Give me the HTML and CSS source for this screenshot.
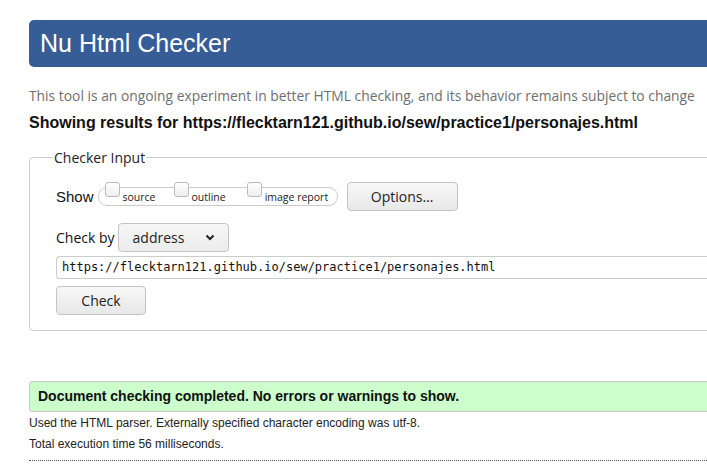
FILE: index.html
```html
<!DOCTYPE html>
<html lang="en">
<head>
<meta charset="utf-8">
<title>Nu Html Checker</title>
<link rel="stylesheet" href="styles.css">
</head>
<body>
<div class="page">
  <h1 class="banner">Nu Html Checker</h1>
  <p class="tagline">This tool is an ongoing experiment in better HTML checking, and its behavior remains subject to change</p>
  <p class="showing">Showing results for https://flecktarn121.github.io/sew/practice1/personajes.html</p>
  <fieldset class="input-box">
    <legend class="legend">Checker Input</legend>
    <div class="row show-row">
      <span class="show-label">Show</span>
      <span class="cb-group">
        <label class="cb"><span class="box"></span>source</label>
        <label class="cb"><span class="box"></span>outline</label>
        <label class="cb"><span class="box"></span>image report</label>
      </span>
      <span class="btn options">Options…</span>
    </div>
    <div class="row checkby-row">
      <span class="checkby-label">Check by</span>
      <span class="select">address<svg class="chev" width="10" height="7" viewBox="0 0 10 7"><path d="M1.5 1.5 L5 5 L8.5 1.5" fill="none" stroke="#222" stroke-width="2"/></svg></span>
    </div>
    <div class="url">https://flecktarn121.github.io/sew/practice1/personajes.html</div>
    <span class="btn check">Check</span>
  </fieldset>
  <div class="success">Document checking completed. No errors or warnings to show.</div>
  <p class="details first">Used the HTML parser. Externally specified character encoding was utf-8.</p>
  <p class="details">Total execution time 56 milliseconds.</p>
  <hr class="dotted">
</div>
</body>
</html>
```
FILE: styles.css
```css
html, body {
  margin: 0;
  padding: 0;
  overflow: hidden;
  background: #fff;
}
.page {
  width: 760px;
  padding: 20px 0 0 29px;
  font-family: "Liberation Sans", Arial, sans-serif;
  color: #111;
}
.banner {
  margin: 0;
  height: 47px;
  box-sizing: border-box;
  background: #365d95;
  color: #fff;
  font-weight: normal;
  font-size: 25px;
  line-height: 47px;
  padding-left: 11px;
  border-radius: 5px 0 0 5px;
}
.tagline {
  margin: 19px 0 0;
  font-family: "Open Sans", sans-serif;
  font-size: 13.85px;
  line-height: 20px;
  color: #6f6f6f;
}
.showing {
  margin: 7px 0 0;
  font-weight: bold;
  font-size: 16px;
  line-height: 20px;
  color: #111;
}
.input-box {
  margin: 15px 0 0;
  padding: 8px 0 15px 26px;
  border: 1px solid #ccc;
  border-radius: 4px 0 0 4px;
}
.legend {
  margin-left: -3px;
  padding: 0 1px;
  font-family: "Open Sans", sans-serif;
  font-size: 14px;
  color: #222;
}
.row {
  display: flex;
  align-items: center;
}
.show-row {
  margin-top: 7px;
}
.show-label {
  font-size: 15px;
  margin-right: 4px;
}
.cb-group {
  display: flex;
  align-items: center;
  height: 19px;
  border: 1px solid #ccc;
  border-radius: 9px;
  padding: 0 6px 0 6px;
  width: 240px;
  box-sizing: border-box;
  font-family: "Open Sans", sans-serif;
  font-size: 10.5px;
  color: #222;
}
.cb {
  display: flex;
  align-items: flex-end;
  margin-right: 18px;
}
.cb:nth-child(2) {
  margin-right: 21px;
}
.cb:last-child {
  margin-right: 0;
}
.box {
  width: 13px;
  height: 13px;
  border: 1px solid #bbb;
  border-radius: 3px;
  background: linear-gradient(#fff, #eee);
  margin-right: 3px;
  margin-top: -8px;
  align-self: flex-start;
}
.btn {
  display: inline-flex;
  align-items: center;
  justify-content: center;
  box-sizing: border-box;
  border: 1px solid #c4c4c4;
  border-radius: 4px;
  background: linear-gradient(#f7f7f7, #e8e8e8);
  font-family: "Open Sans", sans-serif;
  font-size: 14px;
  color: #222;
}
.options {
  margin-left: 9px;
  width: 111px;
  height: 29px;
}
.checkby-row {
  margin-top: 12px;
}
.checkby-label {
  font-family: "Open Sans", sans-serif;
  font-size: 14px;
  margin-right: 3px;
}
.select {
  display: inline-flex;
  align-items: center;
  justify-content: space-between;
  width: 111px;
  height: 29px;
  box-sizing: border-box;
  padding: 0 13px 0 14px;
  border: 1px solid #c4c4c4;
  border-radius: 4px;
  background: linear-gradient(#f6f6f6, #ececec);
  font-family: "Open Sans", sans-serif;
  font-size: 14px;
  color: #222;
}
.url {
  margin-top: 4px;
  height: 23px;
  line-height: 21px;
  box-sizing: border-box;
  border: 1px solid #ccc;
  border-right: none;
  border-radius: 4px 0 0 4px;
  padding-left: 5px;
  font-family: "DejaVu Sans Mono", monospace;
  font-size: 12px;
  color: #111;
}
.check {
  margin-top: 7px;
  width: 90px;
  height: 29px;
}
.success {
  margin-top: 50px;
  height: 31px;
  box-sizing: border-box;
  background: #ccffcc;
  border-top: 1px solid #c8c8c8;
  border-bottom: 1px solid #c8c8c8;
  border-left: 1px solid #c8c8c8;
  border-radius: 4px 0 0 4px;
  padding-left: 8px;
  font-weight: bold;
  font-size: 14px;
  line-height: 29px;
  color: #111;
}
.details {
  margin: 0;
  font-size: 12px;
  line-height: 21px;
  color: #222;
}
.details.first {
  margin-top: 1px;
}
.dotted {
  margin: 5px 0 0;
  border: none;
  border-top: 1px dotted #555;
  height: 0;
}
```
